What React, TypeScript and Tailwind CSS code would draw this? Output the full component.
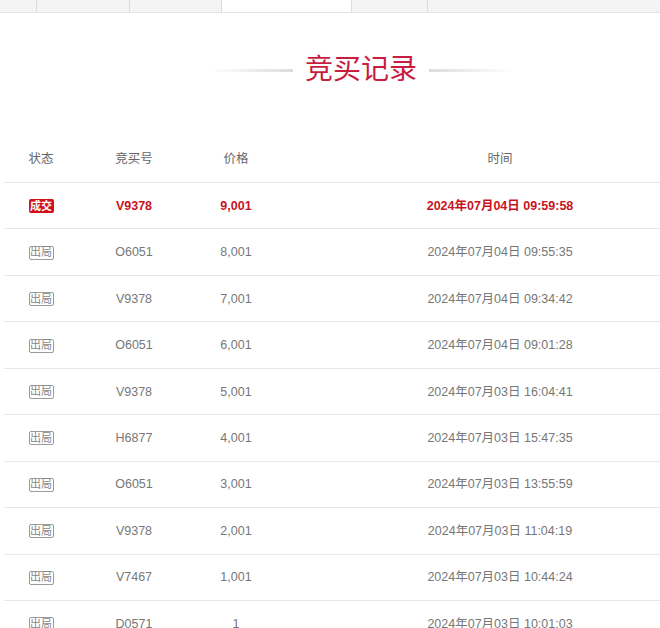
import React from 'react'

interface BidRecord {
  status: 'win' | 'out'
  bidder: string
  price: string
  time: string
}

const records: BidRecord[] = [
  { status: 'win', bidder: 'V9378', price: '9,001', time: '2024年07月04日 09:59:58' },
  { status: 'out', bidder: 'O6051', price: '8,001', time: '2024年07月04日 09:55:35' },
  { status: 'out', bidder: 'V9378', price: '7,001', time: '2024年07月04日 09:34:42' },
  { status: 'out', bidder: 'O6051', price: '6,001', time: '2024年07月04日 09:01:28' },
  { status: 'out', bidder: 'V9378', price: '5,001', time: '2024年07月03日 16:04:41' },
  { status: 'out', bidder: 'H6877', price: '4,001', time: '2024年07月03日 15:47:35' },
  { status: 'out', bidder: 'O6051', price: '3,001', time: '2024年07月03日 13:55:59' },
  { status: 'out', bidder: 'V9378', price: '2,001', time: '2024年07月03日 11:04:19' },
  { status: 'out', bidder: 'V7467', price: '1,001', time: '2024年07月03日 10:44:24' },
  { status: 'out', bidder: 'D0571', price: '1', time: '2024年07月03日 10:01:03' },
]

const FONT = "font-['Liberation_Sans','Noto_Sans_CJK_SC',sans-serif]"
const COLS = 'grid grid-cols-[74px_112px_92px_436px] items-center text-center'

function StatusBadge({ status }: { status: BidRecord['status'] }) {
  if (status === 'win') {
    return (
      <span className="inline-flex h-[14px] w-[25px] items-center justify-center rounded-[2px] bg-[#d0111b] text-[11px] leading-none text-white">
        成交
      </span>
    )
  }
  return (
    <span className="inline-flex h-[14px] w-[25px] items-center justify-center rounded-[2px] border border-[#9a9a9a] text-[11px] leading-none text-[#888]">
      出局
    </span>
  )
}

export default function App() {
  return (
    <div className={`w-[660px] h-[628px] overflow-hidden bg-white ${FONT}`}>
      <div className="w-[722px]">
        {/* tab strip (cut off at top) */}
        <div className="flex h-[13px] border-b border-[#e2e2e2] bg-[#f4f4f4]">
          <div className="w-[37px] border-r border-[#dcdcdc]" />
          <div className="w-[93px] border-r border-[#dcdcdc]" />
          <div className="w-[92px] border-r border-[#dcdcdc]" />
          <div className="w-[130px] border-r border-[#dcdcdc] bg-white" />
          <div className="w-[76px] border-r border-[#dcdcdc]" />
          <div className="flex-1" />
        </div>

        {/* title */}
        <div className="mt-[37px] flex items-center justify-center gap-3">
          <span className="h-[3px] w-[84px] bg-gradient-to-r from-transparent to-[#dcdcdc]" />
          <h2 className="text-[28px] leading-[40px] font-normal text-[#c81d3e]">竞买记录</h2>
          <span className="h-[3px] w-[84px] bg-gradient-to-r from-[#dcdcdc] to-transparent" />
        </div>

        {/* table */}
        <div className="mx-[4px] mt-[44px]">
          <div className={`${COLS} h-[49px] pt-[2px] border-b border-[#e8e8e8] text-[12.5px] text-[#666]`}>
            <div>状态</div>
            <div>竞买号</div>
            <div>价格</div>
            <div>时间</div>
          </div>
          {records.map((r, i) => {
            const win = r.status === 'win'
            return (
              <div
                key={i}
                className={`${COLS} h-[46.44px] pt-[1px] border-b border-[#e8e8e8] text-[12.5px] ${
                  win ? 'font-bold text-[#c8141e]' : 'text-[#777]'
                }`}
              >
                <div className="flex justify-center">
                  <StatusBadge status={r.status} />
                </div>
                <div>{r.bidder}</div>
                <div>{r.price}</div>
                <div>{r.time}</div>
              </div>
            )
          })}
        </div>
      </div>
    </div>
  )
}
